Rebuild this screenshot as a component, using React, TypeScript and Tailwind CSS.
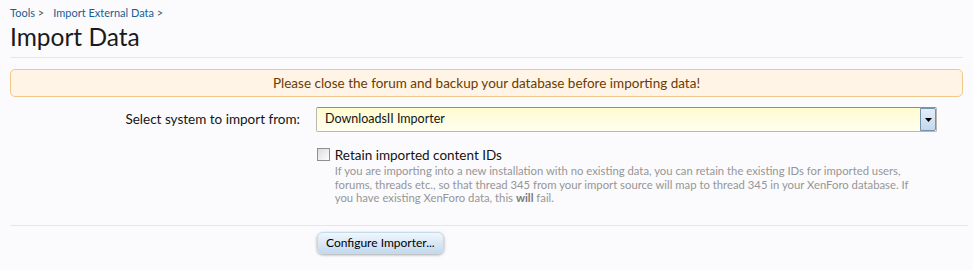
import React from "react";

export default function App() {
  return (
    <div
      className="w-[973px] h-[270px] bg-[#fbfbfd] overflow-hidden text-[13px] text-[#141414]"
      style={{ fontFamily: "Lato, 'Liberation Sans', sans-serif" }}
    >
      <div className="px-[10px] pt-[6px]">
        <div className="flex items-center gap-[9px] text-[11px] leading-[14px] text-[#176093]">
          <span>
            Tools <span className="text-[#555]">&gt;</span>
          </span>
          <span>
            Import External Data <span className="text-[#555]">&gt;</span>
          </span>
        </div>
        <h1 className="text-[24.5px] leading-[28px] mt-[3px] text-[#1a1a1a]">Import Data</h1>
        <div className="mt-[6px] h-px bg-[#d7edf3]" />
        <div className="mt-[11px] h-[28px] rounded-[5px] border border-[#f1c88a] bg-[#fff4e5] flex items-center justify-center text-[13.5px] text-[#6c3b00]">
          Please close the forum and backup your database before importing data!
        </div>

        <div className="mt-[10px] flex items-center">
          <div className="w-[290px] text-right text-[13.5px]">Select system to import from:</div>
          <div className="ml-[16px] w-[621px] h-[25px] border border-[#b8b8b0] border-t-[#8f8f8a] rounded-[2px] bg-gradient-to-b from-[#fffbcf] to-[#fffff0] flex items-center relative">
            <span className="pl-[8px] text-[12.5px]">DownloadsII Importer</span>
            <div className="absolute right-0 top-0 bottom-0 w-[16px] bg-gradient-to-b from-[#e3eefa] to-[#c3d7ec] flex items-center justify-center rounded-r-[2px] border border-[#7593ad]">
              <svg width="7" height="4" viewBox="0 0 7 4">
                <path d="M0 0h7L3.5 4z" fill="#000" />
              </svg>
            </div>
          </div>
        </div>

        <div className="mt-[15px] ml-[307px] flex items-start">
          <div className="w-[13px] h-[13px] mt-[1px] border border-[#8e8f8f] bg-gradient-to-br from-[#dcdcdc] to-[#fdfdfd]" />
          <div className="ml-[5px] w-[640px]">
            <div className="text-[13.5px] leading-[16px]">Retain imported content IDs</div>
            <div className="mt-[1px] text-[11.3px] leading-[13.5px] text-[#969696] whitespace-nowrap">
              If you are importing into a new installation with no existing data, you can retain the existing IDs for imported users,
              <br />
              forums, threads etc., so that thread 345 from your import source will map to thread 345 in your XenForo database. If
              <br />
              you have existing XenForo data, this <b className="font-bold text-[#7a7a7a]">will</b> fail.
            </div>
          </div>
        </div>

        <div className="mt-[20px] h-px bg-[#d7edf3] mr-[-5px]" />

        <div className="mt-[6px] ml-[307px]">
          <button className="h-[22px] px-[8px] rounded-[6px] border border-[#c4dbec] bg-gradient-to-b from-[#f0f7fd] to-[#c3d9ee] text-[12px] text-[#000] shadow-[0_1px_3px_rgba(0,0,0,0.35)]">
            Configure Importer...
          </button>
        </div>
      </div>
    </div>
  );
}
